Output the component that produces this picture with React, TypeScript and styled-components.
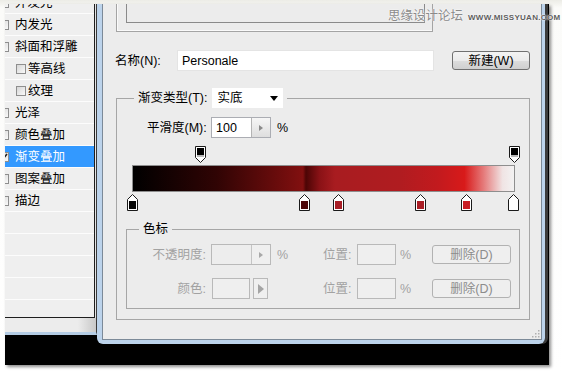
import React from "react";
import styled, { createGlobalStyle } from "styled-components";

const GlobalStyle = createGlobalStyle`
  html, body {
    margin: 0;
    padding: 0;
    background: #fff;
  }
  body {
    font-family: "Liberation Sans", "Noto Sans CJK SC", sans-serif;
    font-size: 12px;
    color: #000;
  }
`;

const Frame = styled.div`
  position: relative;
  width: 562px;
  height: 372px;
  box-sizing: border-box;
  padding: 4px 13px 7px 5px;
  background: linear-gradient(#ecece6, #fbfbf9 8px, #fff);
`;

const Screen = styled.div`
  width: 544px;
  height: 361px;
  display: flex;
  align-items: flex-start;
  overflow: hidden;
  background: #000;
  box-shadow: 2px 2px 3px rgba(0, 0, 0, 0.45);
`;

const Watermark = styled.div`
  position: absolute;
  z-index: 2;
  top: 8px;
  left: 388px;
  display: flex;
  align-items: center;
  gap: 5px;
  color: #8a8a8a;
  font-size: 12.5px;
  line-height: 15px;
  white-space: nowrap;
  text-shadow: 0 0 1px #fff, 0 0 2px #fff;
`;

const WatermarkUrl = styled.span`
  font-family: "Liberation Sans", sans-serif;
  font-size: 8px;
  font-weight: bold;
  letter-spacing: 0.3px;
  color: #5e5e5e;
  padding-top: 2px;
`;

/* ---------- layer style list (left) ---------- */

const LayerPanel = styled.div`
  width: 92px;
  height: 331px;
  box-sizing: border-box;
  flex-shrink: 0;
  display: flex;
  flex-direction: column;
  background: #e4e4e4;
  border-right: 1px solid #3a3a3a;
  border-bottom: 3px solid #b4cce4;
`;

const StyleList = styled.div`
  width: 90px;
  height: 314px;
  box-sizing: border-box;
  overflow: hidden;
  background: #efefef;
  border-right: 1px solid #1e1e1e;
  border-bottom: 1px solid #1e1e1e;
`;

const StyleRows = styled.ul`
  list-style: none;
  margin: -12px 0 0 0;
  padding: 0;
`;

const StyleRow = styled.li<{ $selected?: boolean; $sub?: boolean }>`
  height: 22px;
  box-sizing: border-box;
  display: flex;
  align-items: center;
  gap: ${(p) => (p.$sub ? "2px" : "6px")};
  padding-left: ${(p) => (p.$sub ? "11px" : "0")};
  border-bottom: 1px solid #fcfcfc;
  background: ${(p) => (p.$selected ? "#3399ff" : "transparent")};
  color: ${(p) => (p.$selected ? "#fff" : "#000")};
  font-size: 12.5px;
  line-height: 16px;
  white-space: nowrap;
`;

const Check = styled.span<{ $sub?: boolean }>`
  width: 10px;
  height: 10px;
  box-sizing: border-box;
  flex-shrink: 0;
  margin-left: ${(p) => (p.$sub ? "0" : "-6px")};
  border: 1px solid #8e8e8e;
  background: linear-gradient(135deg, #d6d6d6, #f9f9f9);
  display: flex;
  align-items: center;
  justify-content: center;
`;

const LayerBand = styled.div`
  flex: 1;
  background: linear-gradient(to right, #ececec 80%, #c8c8c8);
`;

/* ---------- gradient editor dialog ---------- */

const Dialog = styled.div`
  width: 448px;
  height: 340px;
  box-sizing: border-box;
  flex-shrink: 0;
  display: flex;
  border-style: solid;
  border-color: #bcd3eb;
  border-width: 0 3px 4px 5px;
  border-radius: 0 0 6px 6px;
  box-shadow: 3px 0 0 #3c3c3c;
`;

const DialogBody = styled.div`
  position: relative;
  flex: 1;
  display: flex;
  flex-direction: column;
  align-items: flex-start;
  padding-left: 13px;
  background: #ececec;
  border: 1px solid #7c8a98;
  border-top: none;
`;

const PresetBox = styled.div`
  width: 317px;
  height: 28px;
  box-sizing: border-box;
  padding-left: 9px;
  border: 1px solid #a4a4a4;
  border-top: none;
  box-shadow: inset 1px -1px 0 #fafafa;
`;

const PresetInner = styled.div`
  width: 299px;
  height: 19px;
  box-sizing: border-box;
  border: 1px solid #8a8a8a;
  border-top: none;
`;

const NameRow = styled.div`
  display: flex;
  align-items: center;
  height: 21px;
  margin: 18px 0 0 -1px;
`;

const Label = styled.span<{ $w?: number; $muted?: boolean }>`
  width: ${(p) => (p.$w ? `${p.$w}px` : "auto")};
  flex-shrink: 0;
  color: ${(p) => (p.$muted ? "#a2a2a2" : "#000")};
  font-size: 12.5px;
  line-height: 16px;
  white-space: nowrap;
`;

const TextBox = styled.div<{ $w: number }>`
  width: ${(p) => p.$w}px;
  height: 21px;
  box-sizing: border-box;
  padding-left: 4px;
  display: flex;
  align-items: center;
  background: #fff;
  border: 1px solid #e4e4e4;
  font-size: 12.5px;
`;

const PushButton = styled.div<{ $disabled?: boolean; $w: number }>`
  width: ${(p) => p.$w}px;
  height: 19px;
  box-sizing: border-box;
  display: flex;
  align-items: center;
  justify-content: center;
  border: 1px solid ${(p) => (p.$disabled ? "#b2b2b2" : "#707070")};
  border-radius: 3px;
  background: ${(p) =>
    p.$disabled
      ? "#efefef"
      : "linear-gradient(#f3f3f3, #ebebeb 50%, #dddddd 51%, #cfcfcf)"};
  color: ${(p) => (p.$disabled ? "#8c8c8c" : "#000")};
  font-size: 12.5px;
  line-height: 16px;
`;

const Group = styled.fieldset<{ $w: number; $ml: number; $mt: number; $pb: number }>`
  width: ${(p) => p.$w}px;
  min-width: 0;
  box-sizing: border-box;
  margin: ${(p) => p.$mt}px 0 0 ${(p) => p.$ml}px;
  padding: 0 0 ${(p) => p.$pb}px 0;
  border: 1px solid #a6a6a6;
`;

const Legend = styled.legend<{ $ml: number }>`
  margin-left: ${(p) => p.$ml}px;
  padding: 0 4px;
  display: flex;
  align-items: center;
  gap: 5px;
  font-size: 12.5px;
  line-height: 14px;
`;

const SelectBox = styled.div`
  width: 71px;
  height: 20px;
  box-sizing: border-box;
  padding: 0 5px;
  display: flex;
  align-items: center;
  justify-content: space-between;
  background: #fff;
`;

const SmoothRow = styled.div`
  display: flex;
  align-items: center;
  height: 21px;
  margin-top: 9px;
  padding-left: 30px;
`;

const Spin = styled.div<{ $disabled?: boolean }>`
  width: 60px;
  height: 21px;
  box-sizing: border-box;
  display: flex;
  border: 1px solid ${(p) => (p.$disabled ? "#b9b9b9" : "#abadb3")};
  background: ${(p) => (p.$disabled ? "#ededed" : "#fff")};
`;

const SpinValue = styled.div`
  flex: 1;
  padding-left: 4px;
  display: flex;
  align-items: center;
  font-size: 12.5px;
`;

const SpinArrow = styled.div<{ $disabled?: boolean }>`
  width: 18px;
  display: flex;
  align-items: center;
  justify-content: center;
  border-left: 1px solid ${(p) => (p.$disabled ? "#c4c4c4" : "#b4b4b4")};
  background: ${(p) =>
    p.$disabled ? "#efefef" : "linear-gradient(#f6f6f6, #dedede)"};
`;

const Percent = styled.span<{ $muted?: boolean; $ml?: number }>`
  margin-left: ${(p) => p.$ml ?? 0}px;
  color: ${(p) => (p.$muted ? "#a2a2a2" : "#000")};
  font-size: 12.5px;
`;

const StopTrack = styled.div<{ $mt: number }>`
  position: relative;
  width: 383px;
  height: 17px;
  margin: ${(p) => p.$mt}px 0 0 15px;
`;

const Stop = styled.svg`
  position: absolute;
  top: 0;
`;

const GradientBar = styled.div`
  width: 383px;
  height: 27px;
  box-sizing: border-box;
  margin: 2px 0 0 15px;
  border: 1px solid #8e8e8e;
  background: linear-gradient(
    to right,
    #000 0%,
    #300404 22%,
    #6a0c0c 38%,
    #821010 44.6%,
    #4c0505 45.4%,
    #8a1216 49%,
    #a81c20 53%,
    #b01c20 70%,
    #c21a1e 80%,
    #d81a1a 87%,
    #e57a7a 92%,
    #f0e4e4 97%,
    #f2f2f2 100%
  );
`;

const StopGrid = styled.div`
  display: grid;
  grid-template-columns: 84px 66px 46px 34px 43px 32px 79px;
  grid-auto-rows: 21px;
  row-gap: 13px;
  align-items: center;
  margin-top: 7px;
`;

const RowLabel = styled.span`
  padding-right: 5px;
  text-align: right;
  color: #a2a2a2;
  font-size: 12.5px;
  line-height: 16px;
  white-space: nowrap;
`;

const SmallBox = styled.div<{ $w: number }>`
  width: ${(p) => p.$w}px;
  height: 21px;
  box-sizing: border-box;
  border: 1px solid #b9b9b9;
  background: #efefef;
`;

const ColorField = styled.div`
  display: flex;
  gap: 3px;
  padding-left: 1px;
`;

const ArrowButton = styled.div`
  width: 15px;
  height: 21px;
  box-sizing: border-box;
  display: flex;
  align-items: center;
  justify-content: center;
  border: 1px solid #b9b9b9;
  background: #efefef;
`;

const ButtonCell = styled.div`
  display: flex;
  align-items: center;
`;

const Grip = styled.svg`
  position: absolute;
  right: 1px;
  bottom: 1px;
`;

const StopArrowUp = ({ color, x }: { color: string; x: number }) => (
  <Stop width="11" height="17" viewBox="0 0 11 17" style={{ left: x - 5 }}>
    <path d="M5.5 0.5L10.5 5.5V16.5H0.5V5.5Z" fill="#fff" stroke="#1a1a1a" />
    {color !== "#fff" && <rect x="2" y="7" width="7" height="8" fill={color} />}
  </Stop>
);

const StopArrowDown = ({ x }: { x: number }) => (
  <Stop width="11" height="17" viewBox="0 0 11 17" style={{ left: x - 5 }}>
    <path d="M0.5 0.5H10.5V11.5L5.5 16.5L0.5 11.5Z" fill="#fff" stroke="#1a1a1a" />
    <rect x="2" y="2" width="7" height="7" fill="#000" />
    <rect x="2" y="9" width="7" height="2" fill="#b8b8b8" />
  </Stop>
);

const Triangle = ({ dir, color }: { dir: "down" | "right"; color: string }) =>
  dir === "down" ? (
    <svg width="8" height="5" viewBox="0 0 8 5">
      <path d="M0 0H8L4 5Z" fill={color} />
    </svg>
  ) : (
    <svg width="6" height="10" viewBox="0 0 6 10">
      <path d="M0 0L6 5L0 10Z" fill={color} />
    </svg>
  );

const layerStyles = [
  { name: "外发光" },
  { name: "内发光" },
  { name: "斜面和浮雕" },
  { name: "等高线", sub: true },
  { name: "纹理", sub: true },
  { name: "光泽" },
  { name: "颜色叠加" },
  { name: "渐变叠加", selected: true },
  { name: "图案叠加" },
  { name: "描边" },
  { name: "" },
  { name: "" },
  { name: "" },
  { name: "" },
  { name: "" },
];

const opacityStops = [68, 382];

const colorStops = [
  { x: 0, color: "#050505" },
  { x: 172, color: "#4c0608" },
  { x: 206, color: "#a81e26" },
  { x: 288, color: "#aa1e26" },
  { x: 334, color: "#c81c24" },
  { x: 381, color: "#fff" },
];

export default function App() {
  return (
    <Frame>
      <GlobalStyle />
      <Screen>
        <LayerPanel>
          <StyleList>
            <StyleRows>
              {layerStyles.map((s, i) => (
                <StyleRow key={i} $selected={s.selected} $sub={s.sub}>
                  {s.name && (
                    <Check $sub={s.sub}>
                      {s.selected && (
                        <svg width="8" height="8" viewBox="0 0 8 8">
                          <path d="M1 4L3 6L7 1" stroke="#222" strokeWidth="1.6" fill="none" />
                        </svg>
                      )}
                    </Check>
                  )}
                  {s.name}
                </StyleRow>
              ))}
            </StyleRows>
          </StyleList>
          <LayerBand />
        </LayerPanel>

        <Dialog>
          <DialogBody>
            <PresetBox>
              <PresetInner />
            </PresetBox>

            <NameRow>
              <Label $w={62}>名称(N):</Label>
              <TextBox $w={257}>Personale</TextBox>
              <PushButton $w={78} style={{ marginLeft: 18 }}>
                新建(W)
              </PushButton>
            </NameRow>

            <Group $w={414} $ml={0} $mt={17} $pb={10}>
              <Legend $ml={17}>
                <Label>渐变类型(T):</Label>
                <SelectBox>
                  <Label>实底</Label>
                  <Triangle dir="down" color="#000" />
                </SelectBox>
              </Legend>

              <SmoothRow>
                <Label $w={64}>平滑度(M):</Label>
                <Spin>
                  <SpinValue>100</SpinValue>
                  <SpinArrow>
                    <svg width="4" height="6" viewBox="0 0 4 6">
                      <path d="M0 0L4 3L0 6Z" fill="#8a8a8a" />
                    </svg>
                  </SpinArrow>
                </Spin>
                <Percent $ml={6}>%</Percent>
              </SmoothRow>

              <StopTrack $mt={8}>
                {opacityStops.map((x) => (
                  <StopArrowDown key={x} x={x} />
                ))}
              </StopTrack>
              <GradientBar />
              <StopTrack $mt={2}>
                {colorStops.map((s) => (
                  <StopArrowUp key={s.x} x={s.x} color={s.color} />
                ))}
              </StopTrack>

              <Group $w={394} $ml={9} $mt={10} $pb={9}>
                <Legend $ml={12}>
                  <Label>色标</Label>
                </Legend>
                <StopGrid>
                  <RowLabel>不透明度:</RowLabel>
                  <Spin $disabled>
                    <SpinValue />
                    <SpinArrow $disabled>
                      <svg width="4" height="6" viewBox="0 0 4 6">
                        <path d="M0 0L4 3L0 6Z" fill="#a8a8a8" />
                      </svg>
                    </SpinArrow>
                  </Spin>
                  <Percent $muted>%</Percent>
                  <Label $muted>位置:</Label>
                  <SmallBox $w={39} />
                  <Percent $muted>%</Percent>
                  <ButtonCell>
                    <PushButton $w={79} $disabled>
                      删除(D)
                    </PushButton>
                  </ButtonCell>

                  <RowLabel>颜色:</RowLabel>
                  <ColorField>
                    <SmallBox $w={38} />
                    <ArrowButton>
                      <Triangle dir="right" color="#a4a4a4" />
                    </ArrowButton>
                  </ColorField>
                  <span />
                  <Label $muted>位置:</Label>
                  <SmallBox $w={39} />
                  <Percent $muted>%</Percent>
                  <ButtonCell>
                    <PushButton $w={79} $disabled>
                      删除(D)
                    </PushButton>
                  </ButtonCell>
                </StopGrid>
              </Group>
            </Group>

            <Grip width="9" height="9" viewBox="0 0 9 9">
              {[
                [7, 1],
                [7, 4],
                [4, 4],
                [7, 7],
                [4, 7],
                [1, 7],
              ].map(([cx, cy]) => (
                <rect key={`${cx}-${cy}`} x={cx} y={cy} width="1.5" height="1.5" fill="#b0b0b0" />
              ))}
            </Grip>
          </DialogBody>
        </Dialog>
      </Screen>
      <Watermark>
        思缘设计论坛
        <WatermarkUrl>WWW.MISSYUAN.COM</WatermarkUrl>
      </Watermark>
    </Frame>
  );
}
